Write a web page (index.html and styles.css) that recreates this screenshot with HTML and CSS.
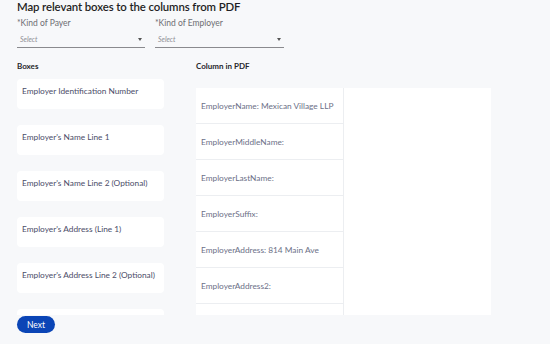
FILE: index.html
```html
<!DOCTYPE html>
<html>
<head>
<meta charset="utf-8">
<link rel="stylesheet" href="styles.css">
</head>
<body>
<div class="page">
  <h1 class="title">Map relevant boxes to the columns from PDF</h1>
  <div class="filters">
    <div class="field field-payer">
      <div class="field-label">*Kind of Payer</div>
      <div class="select"><span class="placeholder">Select</span><span class="caret"></span></div>
    </div>
    <div class="field field-employer">
      <div class="field-label">*Kind of Employer</div>
      <div class="select"><span class="placeholder">Select</span><span class="caret"></span></div>
    </div>
  </div>
  <div class="mapping">
    <div class="col-boxes">
      <div class="col-head">Boxes</div>
      <div class="box">Employer Identification Number</div>
      <div class="box">Employer's Name Line 1</div>
      <div class="box">Employer's Name Line 2 (Optional)</div>
      <div class="box">Employer's Address (Line 1)</div>
      <div class="box">Employer's Address Line 2 (Optional)</div>
      <div class="box"></div>
    </div>
    <div class="col-pdf">
      <div class="col-head">Column in PDF</div>
      <div class="pdf-panel">
        <div class="pdf-list">
          <div class="pdf-row">EmployerName: Mexican Village LLP</div>
          <div class="pdf-row">EmployerMiddleName:</div>
          <div class="pdf-row">EmployerLastName:</div>
          <div class="pdf-row">EmployerSuffix:</div>
          <div class="pdf-row">EmployerAddress: 814 Main Ave</div>
          <div class="pdf-row">EmployerAddress2:</div>
          <div class="pdf-row"></div>
        </div>
        <div class="pdf-blank"></div>
      </div>
    </div>
  </div>
  <button class="next">Next</button>
</div>
</body>
</html>
```
FILE: styles.css
```css
html, body {
  margin: 0;
  padding: 0;
  background: #f7f8fa;
  font-family: Lato, "Open Sans", "Liberation Sans", sans-serif;
}
.page {
  width: 550px;
  height: 344px;
  padding-left: 17px;
  box-sizing: border-box;
  overflow: hidden;
}
.title {
  margin: 0;
  font-size: 11.4px;
  line-height: 14px;
  font-weight: 600;
  color: #1f1f24;
  letter-spacing: -0.1px;
  white-space: nowrap;
}
.filters {
  display: flex;
  gap: 10px;
  margin-top: 4px;
}
.field-payer { width: 128px; }
.field-employer { width: 129px; }
.field-label {
  font-size: 8.5px;
  line-height: 11px;
  color: #6d6d72;
}
.select {
  height: 16px;
  margin-top: 2px;
  border-bottom: 1px solid #8a8a8e;
  display: flex;
  align-items: center;
  justify-content: space-between;
  padding: 0 3px;
}
.placeholder {
  font-size: 7px;
  font-style: italic;
  color: #8e8e94;
}
.caret {
  width: 0;
  height: 0;
  border-left: 2px solid transparent;
  border-right: 2px solid transparent;
  border-top: 3px solid #555;
}
.mapping {
  display: flex;
  gap: 32px;
  margin-top: 12px;
  height: 255px;
  overflow: hidden;
}
.col-head {
  font-size: 8px;
  line-height: 12px;
  font-weight: 700;
  color: #26262b;
  white-space: nowrap;
}
.col-boxes {
  width: 147px;
  display: flex;
  flex-direction: column;
}
.col-boxes .col-head { margin-bottom: 7px; }
.box {
  flex: 0 0 auto;
  height: 30px;
  box-sizing: border-box;
  margin-bottom: 16px;
  padding: 6px 5px;
  background: #fff;
  border-radius: 4px;
  font-size: 8.3px;
  line-height: 12px;
  color: #4b4d68;
  white-space: nowrap;
}
.col-pdf {
  width: 295px;
}
.pdf-panel {
  margin-top: 16px;
  display: flex;
  background: #fff;
  height: 300px;
}
.pdf-list {
  width: 147px;
  border-right: 1px solid #eceef1;
}
.pdf-row {
  height: 36px;
  box-sizing: border-box;
  border-bottom: 1px solid #eceef1;
  display: flex;
  align-items: center;
  padding-left: 5px;
  font-size: 8.3px;
  color: #6c7087;
  white-space: nowrap;
}
.pdf-blank {
  flex: 1;
}
.next {
  display: block;
  margin-top: 1px;
  width: 38px;
  height: 17px;
  padding: 0;
  border: none;
  border-radius: 9px;
  background: #0b45b6;
  color: #fff;
  font-family: Lato, "Open Sans", sans-serif;
  font-size: 8.5px;
}
```
